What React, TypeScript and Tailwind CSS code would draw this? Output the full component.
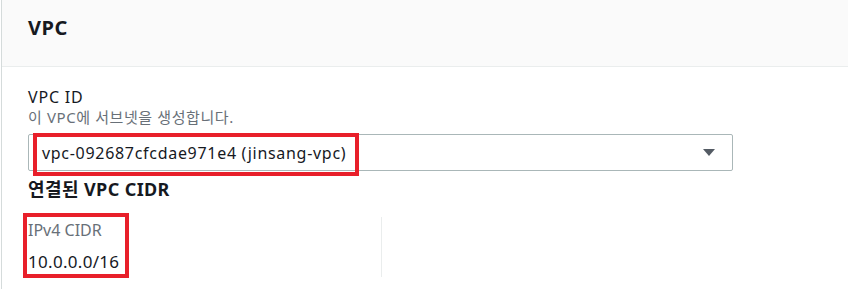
import React from "react";

export default function App() {
  const font = { fontFamily: '"Noto Sans", "Noto Sans CJK KR", sans-serif' };
  return (
    <div
      className="w-[848px] h-[289px] overflow-hidden bg-white pl-px"
      style={font}
    >
      <div className="h-full border-l border-[#d5dbdb]">
        <div className="h-[67px] bg-[#fafafa] border-b border-[#eaeded] pl-[26px] pt-[14px]">
          <h2 className="text-[20px] leading-[28px] font-bold text-[#16191f] tracking-[0.5px]">VPC</h2>
        </div>
        <div className="pl-[26px] pt-[19px]">
          <div className="text-[16px] leading-[22px] text-[#16191f] tracking-[0.8px]">VPC ID</div>
          <div className="text-[15px] leading-[18px] text-[#687078] tracking-[0.6px]">이 VPC에 서브넷을 생성합니다.</div>
          <div className="relative mt-[8px] w-[705px] h-[37px] rounded-[2px] border border-[#aab7b8] flex items-center justify-between pl-[13px] pr-[16px]">
            <span className="text-[16px] text-[#16191f] tracking-[0.7px]">vpc-092687cfcdae971e4 (jinsang-vpc)</span>
            <svg width="14" height="9" viewBox="0 0 14 9">
              <path d="M1 1 L13 1 L7 8 Z" fill="#545b64" />
            </svg>
            <div className="absolute left-[4px] top-[-2px] w-[326px] h-[43px] border-4 border-[#e81f2a]" />
          </div>
          <div className="mt-[6px] text-[18px] leading-[24px] font-bold text-[#16191f] tracking-[0.4px]">연결된 VPC CIDR</div>
          <div className="mt-[16px] flex">
            <div className="relative w-[353px] h-[60px]">
              <div className="text-[16px] leading-[22px] text-[#687078] pt-[2px]">IPv4 CIDR</div>
              <div className="text-[17px] leading-[22px] text-[#16191f] mt-[10px] tracking-[0.3px]">10.0.0.0/16</div>
              <div className="absolute left-[-5px] top-[-4px] w-[106px] h-[65px] border-4 border-[#e81f2a]" />
            </div>
            <div className="w-px h-[60px] bg-[#eaeded]" />
          </div>
        </div>
      </div>
    </div>
  );
}
